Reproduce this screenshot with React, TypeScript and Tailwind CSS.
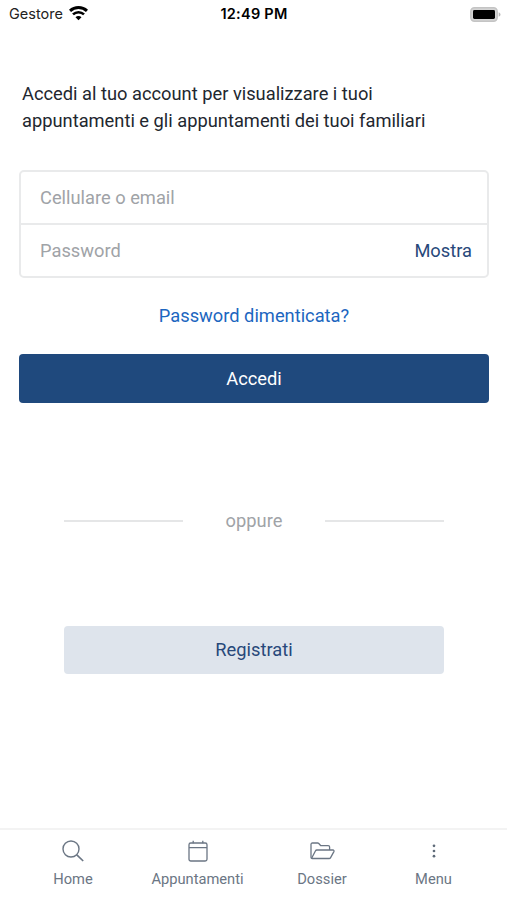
import { useState } from "react";

const WifiIcon = () => (
  <svg width="19" height="15" viewBox="0 0 19 15" fill="none" stroke="#000">
    <path d="M1 4.9a12.4 12.4 0 0 1 17 0" strokeWidth="3" />
    <path d="M4 8.4a8 8 0 0 1 11 0" strokeWidth="2.6" />
    <path d="M9.5 14.2 6.5 11.3a4.2 4.2 0 0 1 6 0z" fill="#000" stroke="none" />
  </svg>
);

const BatteryIcon = () => (
  <svg width="31" height="15" viewBox="0 0 31 15">
    <rect x="0.8" y="0.8" width="26.4" height="13.4" rx="3.6" fill="#d4d4d4" stroke="#c4c4c4" strokeWidth="1.5" />
    <rect x="3" y="3" width="22" height="9" rx="1.4" fill="#000" />
    <path d="M28.7 5.2c2.4 1 2.4 3.6 0 4.6z" fill="#b9b9b9" />
  </svg>
);

const SearchIcon = () => (
  <svg width="22" height="22" viewBox="0 0 22 22" fill="none" stroke="#6b7684" strokeWidth="1.4">
    <circle cx="9" cy="9" r="8" />
    <path d="m14.8 14.8 6.4 6.2" strokeWidth="1.7" />
  </svg>
);

const CalendarIcon = () => (
  <svg width="20" height="22" viewBox="0 0 20 22" fill="none" stroke="#6b7684" strokeWidth="1.3">
    <rect x="1" y="3" width="18" height="18" rx="1.8" />
    <path d="M1 7.6h18M5.2 0.8v2.4M14.8 0.8v2.4" />
  </svg>
);

const FolderIcon = () => (
  <svg width="25" height="18" viewBox="0 0 25 18" fill="none" stroke="#6b7684" strokeWidth="1.3" strokeLinejoin="round">
    <path d="M1.6 16.4A1.6 1.6 0 0 1 1 15.2V2.4C1 1.6 1.6 1 2.4 1h5.2c.5 0 .9.2 1.2.5l2 2.2h7.4c.8 0 1.4.6 1.4 1.4V8" />
    <path d="M1.6 16.2 5.4 9c.3-.6.8-1 1.5-1h16c.9 0 1.4.8 1 1.6l-3.3 6c-.3.6-.8.9-1.5.9H2.2c-.4 0-.6-.1-.6-.3z" />
  </svg>
);

const MenuIcon = () => (
  <svg width="4" height="14" viewBox="0 0 4 14" fill="#5f6b79">
    <circle cx="2" cy="1.8" r="1.35" />
    <circle cx="2" cy="7" r="1.35" />
    <circle cx="2" cy="12.2" r="1.35" />
  </svg>
);

const tabs = [
  { label: "Home", icon: <SearchIcon />, width: "w-[98px]" },
  { label: "Appuntamenti", icon: <CalendarIcon />, width: "w-[151px]" },
  { label: "Dossier", icon: <FolderIcon />, width: "w-[98px]" },
  { label: "Menu", icon: <MenuIcon />, width: "w-[125px]" },
];

const App = () => {
  const [showPassword, setShowPassword] = useState(false);

  return (
    <div className="flex h-[900px] w-[507px] flex-col bg-white font-['Roboto',sans-serif] text-[18.3px]">
      <div className="grid h-7 grid-cols-3 items-center pl-[9px] pr-[6px] font-['Inter',sans-serif] text-sm text-black">
        <div className="flex items-center gap-[6px]">
          <span className="text-[14.5px] text-[#222]">Gestore</span>
          <WifiIcon />
        </div>
        <p className="pr-[2px] text-center text-[14.5px] font-semibold tracking-[0.25px]">12:49 PM</p>
        <div className="flex justify-end">
          <BatteryIcon />
        </div>
      </div>

      <main className="flex flex-1 flex-col pl-[19px] pr-[18px] pt-[52px]">
        <p className="pl-[3px] leading-[27px] text-[#22272f]">
          Accedi al tuo account per visualizzare i tuoi <br /> appuntamenti e gli appuntamenti dei tuoi familiari
        </p>

        <form className="mt-[36px] flex flex-col" onSubmit={(e) => e.preventDefault()}>
          <div className="h-[108px] rounded-[5px] border-2 border-[#e9eaeb]">
            <input
              type="text"
              placeholder="Cellulare o email"
              className="block h-[53px] w-full border-b-2 border-[#e9eaeb] px-[19px] outline-none placeholder:text-[#a0a3a7]"
            />
            <div className="flex h-[52px] items-center justify-between pl-[19px] pr-[15px]">
              <input
                type={showPassword ? "text" : "password"}
                placeholder="Password"
                className="w-[300px] outline-none placeholder:text-[#a0a3a7]"
              />
              <button type="button" className="text-[#28487a]" onClick={() => setShowPassword(!showPassword)}>
                Mostra
              </button>
            </div>
          </div>
          <button type="button" className="mt-6 self-center leading-7 text-[#1c66c0]">
            Password dimenticata?
          </button>
          <button type="submit" className="mt-6 h-[49px] rounded-[4px] bg-[#1f497d] text-white">
            Accedi
          </button>
        </form>

        <div className="mx-[45px] mt-[104px] flex items-center justify-between leading-7 text-[#a0a3a7]">
          <div className="h-[2px] w-[119px] bg-[#e5e6e7]" />
          <span>oppure</span>
          <div className="h-[2px] w-[119px] bg-[#e5e6e7]" />
        </div>

        <button className="mx-[45px] mt-[91px] h-[48px] rounded-[4px] bg-[#dee4ec] text-[#28487a]">Registrati</button>
      </main>

      <nav className="flex h-[72px] border-t-2 border-[#f3f3f3] pl-6 text-[14.7px] text-[#6b7684]">
        {tabs.map((tab) => (
          <a key={tab.label} className={`flex flex-col items-center pt-[9px] ${tab.width}`}>
            <span className="flex h-6 items-center">{tab.icon}</span>
            <span className="mt-[4px] leading-6">{tab.label}</span>
          </a>
        ))}
      </nav>
    </div>
  );
};

export default App;
